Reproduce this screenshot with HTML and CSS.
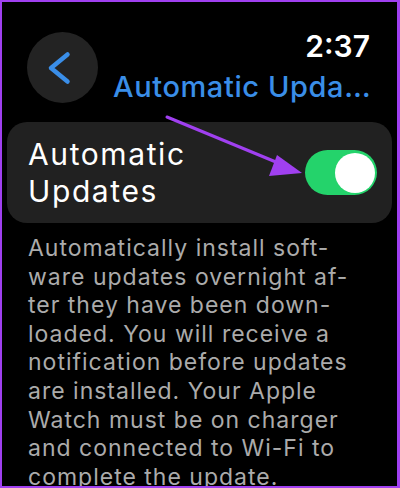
FILE: index.html
```html
<!DOCTYPE html>
<html lang="en">

<head>
  <meta charset="UTF-8">
  <meta name="viewport" content="width=device-width, initial-scale=1.0">
  <title>Automatic Updates</title>
  <link rel="stylesheet" href="styles.css">
</head>

<body>
  <div class="screen">
    <header class="top">
      <a class="back" href="">
        <svg width="71" height="71" viewBox="0 0 71 71">
          <polyline points="40.5,22.5 24,36 40.5,49.5" fill="none" stroke="#3a8ee8" stroke-width="4.5" stroke-linecap="round" stroke-linejoin="round" />
        </svg>
      </a>
      <div class="heading">
        <div class="clock">2:37</div>
        <h1 class="title">Automatic Updates</h1>
      </div>
    </header>

    <div class="card">
      <span class="label">Automatic<br>Updates</span>
      <span class="toggle on"><span class="knob"></span></span>
    </div>

    <p class="note">
      Automatically install soft-<br>
      ware updates overnight af-<br>
      ter they have been down-<br>
      loaded. You will receive a<br>
      notification before updates<br>
      are installed. Your Apple<br>
      Watch must be on charger<br>
      and connected to Wi-Fi to<br>
      complete the update.
    </p>

    <!-- pointer drawn over the toggle -->
    <svg class="pointer" width="400" height="488" viewBox="0 0 400 488">
      <line x1="167" y1="117" x2="288" y2="167" stroke="#a040f0" stroke-width="3" stroke-linecap="round" />
      <polygon points="302,173 277,155 269,176" fill="#a040f0" />
    </svg>
  </div>
</body>

</html>
```

FILE: styles.css
```css
* {
  margin: 0;
  padding: 0;
  box-sizing: border-box;
}

body {
  background-color: #000;
  font-family: Inter, "Noto Sans", sans-serif;
}

.screen {
  position: relative;
  width: 400px;
  height: 488px;
  overflow: hidden;
  background-color: #000;
  border: 2px solid #a040f0;
  border-right-width: 3px;
}

.top {
  display: flex;
  justify-content: space-between;
  padding: 26px 27px 0 25px;
}

.back {
  display: block;
  width: 71px;
  height: 71px;
  margin-top: 4px;
  border-radius: 50%;
  background-color: #232323;
}

.back svg {
  display: block;
}

.heading {
  text-align: right;
}

.clock {
  font-size: 30px;
  line-height: 36px;
  font-weight: 600;
  color: #fff;
}

/* long titles get cut with an ellipsis */
.title {
  width: 262px;
  margin: 5px -5px 0 0;
  font-size: 29px;
  line-height: 36px;
  font-weight: 500;
  letter-spacing: 0.6px;
  color: #3a8ee8;
  text-align: left;
  white-space: nowrap;
  overflow: hidden;
  text-overflow: ellipsis;
}

.card {
  display: flex;
  align-items: center;
  justify-content: space-between;
  height: 101px;
  margin: 17px 5px 0 5px;
  padding: 0 15px 0 21px;
  border-radius: 20px;
  background-color: #212121;
}

.label {
  font-size: 30px;
  line-height: 37px;
  letter-spacing: 1.6px;
  color: #fff;
}

.toggle {
  position: relative;
  display: block;
  width: 72px;
  height: 45px;
  border-radius: 23px;
  background-color: #24d36b;
}

.toggle .knob {
  position: absolute;
  top: 3px;
  right: 2px;
  width: 40px;
  height: 40px;
  border-radius: 50%;
  background-color: #fff;
}

.note {
  margin-top: 11px;
  padding-left: 26px;
  font-size: 23px;
  line-height: 28.6px;
  letter-spacing: 1px;
  color: #ababab;
  white-space: nowrap;
}

.pointer {
  position: absolute;
  top: -2px;
  left: -2px;
}
```
